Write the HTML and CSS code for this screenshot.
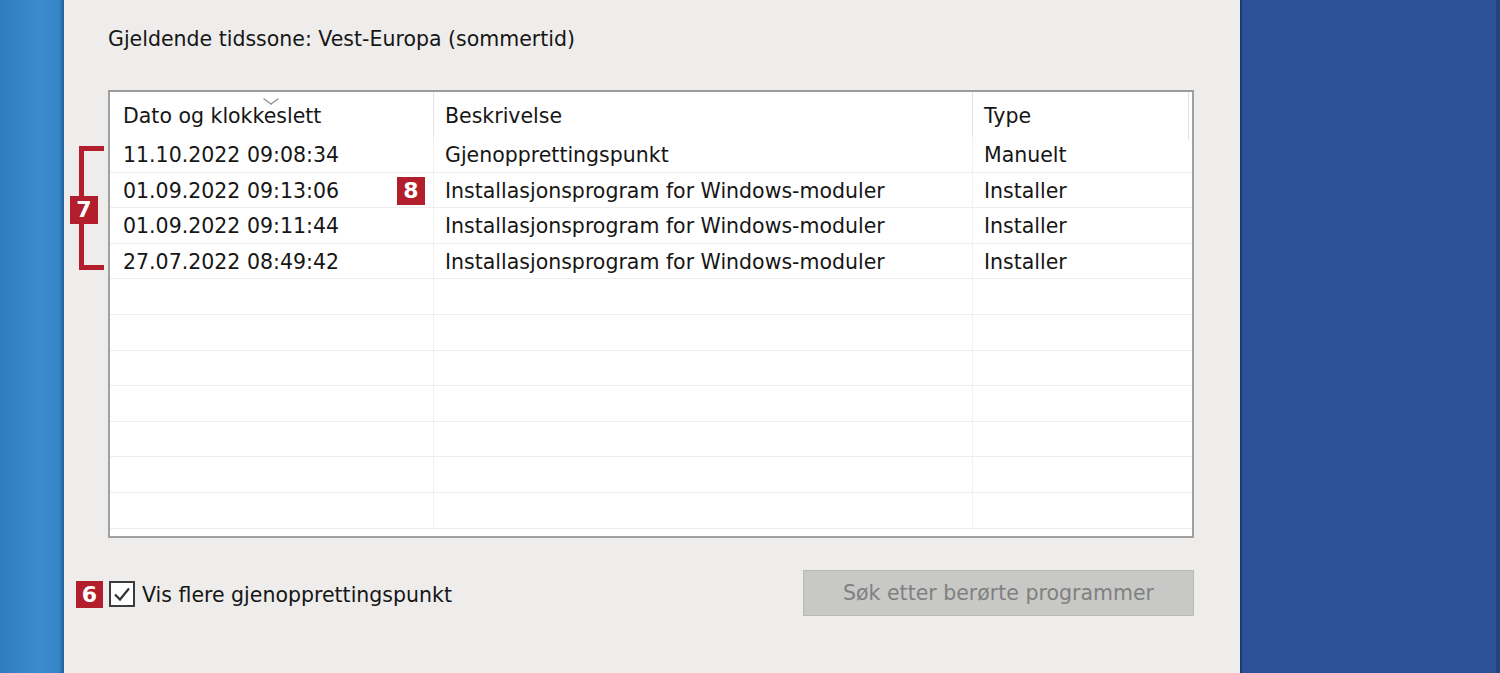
FILE: index.html
```html
<!DOCTYPE html>
<html>
<head>
<meta charset="utf-8">
<link rel="stylesheet" href="styles.css">
</head>
<body>
<div class="screen">
  <div class="desk-left"></div>
  <div class="dialog">
    <div class="tz">Gjeldende tidssone: Vest-Europa (sommertid)</div>
    <div class="list">
      <div class="row head">
        <div class="cell c1">Dato og klokkeslett<span class="sort"></span></div>
        <div class="cell c2">Beskrivelse</div>
        <div class="cell c3">Type</div>
        <div class="cell c4"></div>
      </div>
      <div class="row"><div class="cell c1">11.10.2022 09:08:34</div><div class="cell c2">Gjenopprettingspunkt</div><div class="cell c3">Manuelt</div><div class="cell c4"></div></div>
      <div class="row"><div class="cell c1">01.09.2022 09:13:06</div><div class="cell c2">Installasjonsprogram for Windows-moduler</div><div class="cell c3">Installer</div><div class="cell c4"></div></div>
      <div class="row"><div class="cell c1">01.09.2022 09:11:44</div><div class="cell c2">Installasjonsprogram for Windows-moduler</div><div class="cell c3">Installer</div><div class="cell c4"></div></div>
      <div class="row"><div class="cell c1">27.07.2022 08:49:42</div><div class="cell c2">Installasjonsprogram for Windows-moduler</div><div class="cell c3">Installer</div><div class="cell c4"></div></div>
      <div class="row"><div class="cell c1"></div><div class="cell c2"></div><div class="cell c3"></div><div class="cell c4"></div></div>
      <div class="row"><div class="cell c1"></div><div class="cell c2"></div><div class="cell c3"></div><div class="cell c4"></div></div>
      <div class="row"><div class="cell c1"></div><div class="cell c2"></div><div class="cell c3"></div><div class="cell c4"></div></div>
      <div class="row"><div class="cell c1"></div><div class="cell c2"></div><div class="cell c3"></div><div class="cell c4"></div></div>
      <div class="row"><div class="cell c1"></div><div class="cell c2"></div><div class="cell c3"></div><div class="cell c4"></div></div>
      <div class="row"><div class="cell c1"></div><div class="cell c2"></div><div class="cell c3"></div><div class="cell c4"></div></div>
      <div class="row"><div class="cell c1"></div><div class="cell c2"></div><div class="cell c3"></div><div class="cell c4"></div></div>
    </div>
    <div class="bottom">
      <label class="check">
        <span class="box"><svg width="22" height="22" viewBox="0 0 22 22"><path d="M4 11.5 L9 16.5 L18 5.5" fill="none" stroke="#333" stroke-width="2.2"/></svg></span>
        <span class="lbl">Vis flere gjenopprettingspunkt</span>
      </label>
      <div class="btn">Søk etter berørte programmer</div>
    </div>
    <div class="bracket"></div>
    <div class="badge b7">7</div>
    <div class="badge b8">8</div>
    <div class="badge b6">6</div>
  </div>
  <div class="desk-right"></div>
</div>
</body>
</html>
```
FILE: styles.css
```css
* { box-sizing: border-box; }
html, body { margin: 0; padding: 0; }
body {
  width: 1500px; height: 673px; overflow: hidden;
  font-family: "DejaVu Sans", sans-serif;
  color: #161616;
}
.screen { display: flex; width: 1500px; height: 673px; }
.desk-left {
  width: 64px; flex: none;
  background: linear-gradient(90deg, #2f7bbd 0%, #3b8ccd 60%, #3586c8 92%, #1f5f9c 100%);
}
.desk-right {
  width: 260px; flex: none;
  background: #2c5196;
  border-left: 2px solid #1d3a73;
  border-right: 4px solid #24437f;
}
.dialog {
  position: relative;
  flex: 1;
  background: #eeedeb;
  padding: 26px 0 0 44px;
}
.tz { font-size: 20.5px; line-height: 26px; height: 26px; }
.list {
  margin-top: 38px;
  width: 1086px;
  height: 448px;
  background: #fff;
  border: 2px solid #a0a0a0;
  border-top-color: #9c9c9c;
  overflow: hidden;
}
.row {
  display: grid;
  grid-template-columns: 323px 539px 216px 1fr;
  height: 35.6px;
  border-bottom: 1px solid #efeeec;
}
.row.head { height: 45px; border-bottom: none; }
.cell {
  font-size: 20.5px;
  line-height: 37px;
  padding-left: 13px;
  white-space: nowrap;
  position: relative;
}
.row .c2, .row .c3 { border-left: 1px solid #f3f2f0; padding-left: 11px; }
.row.head .cell { line-height: 48px; }
.row.head .c2, .row.head .c3, .row.head .c4 { border-left: 1px solid #e3e3e3; }
.sort {
  position: absolute; left: 157px; top: 3px;
  width: 8px; height: 8px;
  border-right: 1.5px solid #8a8a8a; border-bottom: 1.5px solid #8a8a8a;
  transform: scaleX(1.4) rotate(45deg);
}
.bottom {
  display: flex; align-items: center; justify-content: space-between;
  width: 1086px;
  margin-top: 32px;
  height: 46px;
}
.check { display: flex; align-items: center; gap: 7px; font-size: 20.5px; margin-left: 1px; padding-top: 2px; }
.lbl { padding-top: 2px; }
.box {
  width: 26px; height: 26px;
  background: #fff; border: 2px solid #3c3c3c;
  display: flex; align-items: center; justify-content: center;
}
.btn {
  width: 391px; height: 46px;
  background: #c8c9c7;
  border: 1px solid #b9bab8;
  color: #808080;
  font-size: 20.5px;
  display: flex; align-items: center; justify-content: center;
}
.badge {
  position: absolute;
  width: 28px; height: 28px;
  background: #b21e2b;
  color: #fff;
  font-family: "DejaVu Sans", sans-serif;
  font-weight: bold;
  font-size: 22px;
  line-height: 28px;
  text-align: center;
}
.b7 { left: 6px; top: 196px; }
.b8 { left: 333px; top: 177px; }
.b6 { left: 12px; top: 581px; width: 27px; height: 27px; line-height: 27px; }
.bracket {
  position: absolute;
  left: 15px; top: 146px;
  width: 25px; height: 124px;
  border: 5px solid #b21e2b;
  border-right: none;
}
```
